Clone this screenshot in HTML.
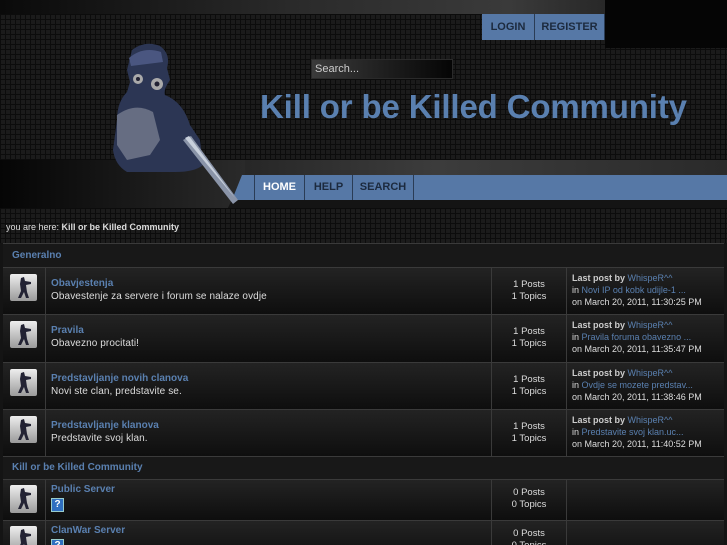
<!DOCTYPE html>
<html><head><meta charset="utf-8"><style>
*{margin:0;padding:0;box-sizing:border-box}
html,body{width:727px;height:545px;overflow:hidden}
body{background:#141414;font-family:"Liberation Sans",sans-serif;position:relative}
.grid{position:absolute;background-color:#1b1b1b;background-image:linear-gradient(#0c0c0c 1px,transparent 1px),linear-gradient(90deg,#0c0c0c 1px,transparent 1px);background-size:5px 5px}
.a{position:absolute}
.btn{position:absolute;background:#5678a6;color:#1c2a3e;font-weight:bold;font-size:11px;text-align:center;border-right:1px solid #2a3c55}
.row{position:absolute;left:3px;width:721px;background:linear-gradient(#232323,#0e0e0e);border-top:1px solid #3a3a3a}
.cell{position:absolute;top:0;bottom:0;border-left:1px solid #3a3a3a}
.ic{position:absolute;left:7px;width:27px;height:27px;background:linear-gradient(#eee,#9a9a9a);border-radius:2px}
.ic svg{width:27px;height:27px}
.t{font-size:10px;font-weight:bold;color:#5a80b0;position:absolute;left:5px}
.d{font-size:10px;color:#ddd;position:absolute;left:5px;letter-spacing:.1px}
.st{position:absolute;left:0;right:0;text-align:center;font-size:9.5px;color:#ddd;line-height:12px}
.lp{position:absolute;left:5px;font-size:9px;color:#ddd;line-height:12px;white-space:nowrap}
.lp b{color:#ccc}.lp span{color:#5a80b0}
.cat{position:absolute;left:3px;width:721px;background:#181818;border-top:1px solid #3a3a3a;font-size:10px;font-weight:bold;color:#5a80b0;padding-left:9px}
.q{position:absolute;left:5px;width:13px;height:14px;background:#2f6fc0;border:1px solid #9cc;color:#fff;font-size:10px;font-weight:bold;text-align:center;line-height:12px}
</style></head><body>
<div class="grid" style="left:0;top:14px;width:727px;height:146px"></div>
<div class="a" style="left:0;top:0;width:727px;height:14px;background:linear-gradient(90deg,#0a0a0a,#2a2a2a 40%,#3a3a3a 70%,#111 100%)"></div>
<div class="a" style="left:605px;top:0;width:122px;height:48px;background:#050505"></div>
<div class="btn" style="left:482px;top:14px;width:53px;height:26px;line-height:26px">LOGIN</div>
<div class="btn" style="left:535px;top:14px;width:70px;height:26px;line-height:26px">REGISTER</div>
<div class="a" style="left:311px;top:59px;width:142px;height:20px;background:linear-gradient(90deg,#3a3a3a,#050505);border:1px solid #2a2a2a;color:#ccc;font-size:11px;line-height:18px;padding-left:3px">Search...</div>
<div class="a" style="left:260px;top:88px;font-size:33px;font-weight:bold;color:#5a80b0;white-space:nowrap;letter-spacing:-0.15px">Kill or be Killed Community</div>
<div class="a" style="left:0;top:160px;width:727px;height:15px;background:linear-gradient(90deg,#0a0a0a,#2c2c2c 40%,#3c3c3c 60%,#2a2a2a)"></div>
<div class="a" style="left:0;top:160px;width:245px;height:48px;background:linear-gradient(90deg,#050505,#2a2a2a);clip-path:polygon(0 0,100% 0,100% 30%,93% 100%,0 100%)"></div>
<div class="a" style="left:232px;top:175px;width:495px;height:25px;background:#5678a6;clip-path:polygon(10px 0,100% 0,100% 100%,0 100%)"></div>
<div class="btn" style="left:254px;top:175px;width:51px;height:25px;line-height:25px;color:#fff;border-left:1px solid #2a3c55">HOME</div>
<div class="btn" style="left:305px;top:175px;width:48px;height:25px;line-height:25px">HELP</div>
<div class="btn" style="left:353px;top:175px;width:61px;height:25px;line-height:25px">SEARCH</div>
<svg class="a" style="left:105px;top:40px" width="140" height="175" viewBox="0 0 140 175">
<path d="M27 10 Q40 0 55 6 Q66 14 62 28 L65 40 Q58 50 60 55 Q78 62 85 85 L95 100 L98 125 Q90 132 70 132 L22 132 Q10 125 8 110 L12 80 Q12 62 22 52 L25 42 L22 30 Z" fill="#2c3654"/>
<path d="M24 18 Q38 6 56 12 L58 22 L26 26 Z" fill="#4a5680"/>
<path d="M12 75 Q30 62 48 72 L55 100 L45 115 L22 120 L12 105 Z" fill="#666d82"/>
<circle cx="33" cy="39" r="5" fill="#aaa"/><circle cx="52" cy="44" r="6" fill="#aaa"/>
<circle cx="33" cy="39" r="2" fill="#223"/><circle cx="52" cy="44" r="2.5" fill="#223"/>
<path d="M78 100 L86 96 L133 160 L128 164 Z" fill="#8a94a8"/>
<path d="M80 98 L84 96 L130 158 Z" fill="#c8d0dc"/>
</svg>
<div class="grid" style="left:0;top:208px;width:727px;height:35px"></div>
<div class="a" style="left:6px;top:222px;font-size:9px;color:#ddd">you are here: <b>Kill or be Killed Community</b></div>
<div class="cat" style="top:243px;height:24px;line-height:23px">Generalno</div>

<div class="row" style="top:267px;height:47px"><div class="ic" style="top:6px"><svg viewBox="0 0 27 27"><path d="M11 4 L14 3 L15 7 L21 8 L21 10 L16 11 L17 18 L19 24 L16 24 L14 18 L11 24 L8 24 L11 17 L10 10 Z" fill="#223"/></svg></div>
<div class="cell" style="left:42px;width:446px"><div class="t" style="top:10px">Obavjestenja</div><div class="d" style="top:23px">Obavestenje za servere i forum se nalaze ovdje</div></div>
<div class="cell" style="left:488px;width:75px"><div class="st" style="top:11px">1 Posts<br>1 Topics</div></div>
<div class="cell" style="left:563px;width:158px"><div class="lp" style="top:4px"><b>Last post by</b> <span>WhispeR^^</span><br>in <span>Novi IP od kobk udijle-1 ...</span><br>on March 20, 2011, 11:30:25 PM</div></div></div>

<div class="row" style="top:314px;height:48px"><div class="ic" style="top:6px"><svg viewBox="0 0 27 27"><path d="M11 4 L14 3 L15 7 L21 8 L21 10 L16 11 L17 18 L19 24 L16 24 L14 18 L11 24 L8 24 L11 17 L10 10 Z" fill="#223"/></svg></div>
<div class="cell" style="left:42px;width:446px"><div class="t" style="top:10px">Pravila</div><div class="d" style="top:23px">Obavezno procitati!</div></div>
<div class="cell" style="left:488px;width:75px"><div class="st" style="top:11px">1 Posts<br>1 Topics</div></div>
<div class="cell" style="left:563px;width:158px"><div class="lp" style="top:4px"><b>Last post by</b> <span>WhispeR^^</span><br>in <span>Pravila foruma obavezno ...</span><br>on March 20, 2011, 11:35:47 PM</div></div></div>

<div class="row" style="top:362px;height:47px"><div class="ic" style="top:6px"><svg viewBox="0 0 27 27"><path d="M11 4 L14 3 L15 7 L21 8 L21 10 L16 11 L17 18 L19 24 L16 24 L14 18 L11 24 L8 24 L11 17 L10 10 Z" fill="#223"/></svg></div>
<div class="cell" style="left:42px;width:446px"><div class="t" style="top:10px">Predstavljanje novih clanova</div><div class="d" style="top:23px">Novi ste clan, predstavite se.</div></div>
<div class="cell" style="left:488px;width:75px"><div class="st" style="top:11px">1 Posts<br>1 Topics</div></div>
<div class="cell" style="left:563px;width:158px"><div class="lp" style="top:4px"><b>Last post by</b> <span>WhispeR^^</span><br>in <span>Ovdje se mozete predstav...</span><br>on March 20, 2011, 11:38:46 PM</div></div></div>

<div class="row" style="top:409px;height:47px"><div class="ic" style="top:6px"><svg viewBox="0 0 27 27"><path d="M11 4 L14 3 L15 7 L21 8 L21 10 L16 11 L17 18 L19 24 L16 24 L14 18 L11 24 L8 24 L11 17 L10 10 Z" fill="#223"/></svg></div>
<div class="cell" style="left:42px;width:446px"><div class="t" style="top:10px">Predstavljanje klanova</div><div class="d" style="top:23px">Predstavite svoj klan.</div></div>
<div class="cell" style="left:488px;width:75px"><div class="st" style="top:11px">1 Posts<br>1 Topics</div></div>
<div class="cell" style="left:563px;width:158px"><div class="lp" style="top:4px"><b>Last post by</b> <span>WhispeR^^</span><br>in <span>Predstavite svoj klan.uc...</span><br>on March 20, 2011, 11:40:52 PM</div></div></div>

<div class="cat" style="top:456px;height:23px;line-height:21px">Kill or be Killed Community</div>

<div class="row" style="top:479px;height:41px"><div class="ic" style="top:5px;height:28px"><svg viewBox="0 0 27 27"><path d="M11 4 L14 3 L15 7 L21 8 L21 10 L16 11 L17 18 L19 24 L16 24 L14 18 L11 24 L8 24 L11 17 L10 10 Z" fill="#223"/></svg></div>
<div class="cell" style="left:42px;width:446px"><div class="t" style="top:4px">Public Server</div><div class="q" style="top:18px">?</div></div>
<div class="cell" style="left:488px;width:75px"><div class="st" style="top:7px">0 Posts<br>0 Topics</div></div>
<div class="cell" style="left:563px;width:158px"></div></div>

<div class="row" style="top:520px;height:41px"><div class="ic" style="top:5px;height:28px"><svg viewBox="0 0 27 27"><path d="M11 4 L14 3 L15 7 L21 8 L21 10 L16 11 L17 18 L19 24 L16 24 L14 18 L11 24 L8 24 L11 17 L10 10 Z" fill="#223"/></svg></div>
<div class="cell" style="left:42px;width:446px"><div class="t" style="top:4px">ClanWar Server</div><div class="q" style="top:18px">?</div></div>
<div class="cell" style="left:488px;width:75px"><div class="st" style="top:7px">0 Posts<br>0 Topics</div></div>
<div class="cell" style="left:563px;width:158px"></div></div>
</body></html>
